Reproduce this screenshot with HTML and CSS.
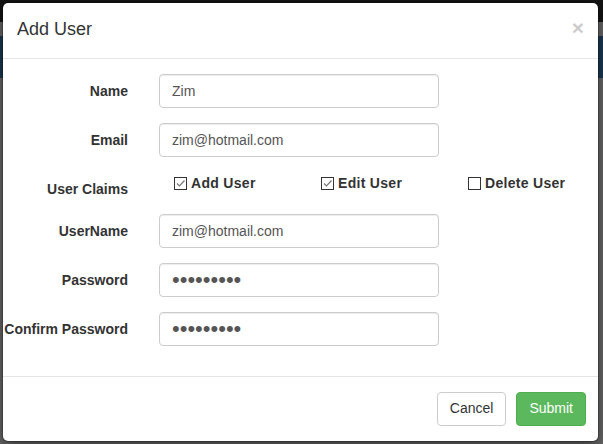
FILE: index.html
```html
<!DOCTYPE html>
<html>
<head>
<meta charset="utf-8">
<link rel="stylesheet" href="styles.css">
</head>
<body>
<div class="modal">
  <div class="modal-header">
    <h4 class="modal-title">Add User</h4>
    <span class="close">&times;</span>
  </div>
  <div class="modal-body">
    <div class="row">
      <label class="lbl">Name</label>
      <input class="input" type="text" value="Zim">
    </div>
    <div class="row">
      <label class="lbl">Email</label>
      <input class="input" type="text" value="zim@hotmail.com">
    </div>
    <div class="row claims-row">
      <label class="lbl">User Claims</label>
      <div class="claims">
        <span class="claim"><span class="box checked"><svg width="11" height="11" viewBox="0 0 11 11"><path d="M2 5.5 L4.5 8 L9.5 2.5" fill="none" stroke="#777" stroke-width="1.2"/></svg></span>Add User</span>
        <span class="claim"><span class="box checked"><svg width="11" height="11" viewBox="0 0 11 11"><path d="M2 5.5 L4.5 8 L9.5 2.5" fill="none" stroke="#777" stroke-width="1.2"/></svg></span>Edit User</span>
        <span class="claim"><span class="box"></span>Delete User</span>
      </div>
    </div>
    <div class="row">
      <label class="lbl">UserName</label>
      <input class="input" type="text" value="zim@hotmail.com">
    </div>
    <div class="row">
      <label class="lbl">Password</label>
      <input class="input pw" type="password" value="123456789">
    </div>
    <div class="row">
      <label class="lbl">Confirm Password</label>
      <input class="input pw" type="password" value="123456789">
    </div>
  </div>
  <div class="modal-footer">
    <button class="btn btn-default">Cancel</button>
    <button class="btn btn-success">Submit</button>
  </div>
</div>
</body>
</html>
```
FILE: styles.css
```css
html, body {
  margin: 0;
  padding: 0;
}
body {
  width: 603px;
  height: 444px;
  overflow: hidden;
  font-family: "Liberation Sans", Arial, sans-serif;
  font-size: 14px;
  line-height: 1.42857;
  color: #333;
  background:
    linear-gradient(to bottom,
      #141414 0, #141414 22px,
      #6a6a6a 22px, #6a6a6a 36px,
      #1d3a53 36px, #1d3a53 78px,
      #6a6a6a 78px, #6a6a6a 100%);
  padding-top: 2px;
  box-sizing: border-box;
}
.modal {
  margin-left: 2px;
  width: 597px;
  box-sizing: border-box;
  background: #fff;
  border: 1px solid rgba(0,0,0,.2);
  border-radius: 6px;
  box-shadow: 0 5px 15px rgba(0,0,0,.5);
  background-clip: padding-box;
  display: flex;
  flex-direction: column;
}
.modal-header {
  padding: 14px 15px 15px 14px;
  border-bottom: 1px solid #e5e5e5;
  display: flex;
  justify-content: space-between;
  align-items: flex-start;
}
.modal-title {
  margin: 0;
  font-size: 18px;
  font-weight: normal;
  line-height: 1.42857;
  color: #333;
}
.close {
  font-size: 21px;
  font-weight: bold;
  line-height: 1;
  color: #000;
  opacity: .2;
  margin-top: 0;
  margin-right: -1px;
}
.modal-body {
  padding: 15px 15px 15px 14px;
  display: flow-root;
}
.row {
  display: grid;
  grid-template-columns: 111px 280px;
  column-gap: 31px;
  margin-bottom: 15px;
}
.lbl {
  display: flex;
  justify-content: flex-end;
  white-space: nowrap;
  padding-top: 7px;
  font-weight: bold;
  line-height: 20px;
  color: #333;
}
.input {
  display: block;
  width: 280px;
  height: 34px;
  box-sizing: border-box;
  padding: 6px 12px;
  font-family: "Liberation Sans", Arial, sans-serif;
  font-size: 14px;
  line-height: 1.42857;
  color: #555;
  background: #fff;
  border: 1px solid #ccc;
  border-radius: 4px;
  box-shadow: inset 0 1px 1px rgba(0,0,0,.075);
  outline: none;
  margin: 0;
}
.input.pw {
  font-size: 22px;
  line-height: 20px;
  padding: 6px 12px;
  letter-spacing: 0;
}
.claims-row {
  grid-template-columns: 111px auto;
  height: 27px;
}
.claims {
  display: grid;
  grid-template-columns: 147px 147px auto;
  padding-left: 15px;
  padding-top: 2px;
}
.claim {
  display: flex;
  align-items: center;
  height: 20px;
  font-weight: bold;
  white-space: nowrap;
  letter-spacing: 0.3px;
}
.box {
  width: 13px;
  height: 13px;
  box-sizing: border-box;
  border: 1px solid #333;
  margin-right: 4px;
  display: flex;
  align-items: center;
  justify-content: center;
  margin-top: -1px;
}
.box svg {
  display: block;
}
.modal-footer {
  margin-top: 0;
  padding: 15px 12px 15px 15px;
  border-top: 1px solid #e5e5e5;
  display: flex;
  justify-content: flex-end;
  gap: 10px;
}
.btn {
  height: 34px;
  box-sizing: border-box;
  padding: 6px 12px;
  font-family: "Liberation Sans", Arial, sans-serif;
  font-size: 14px;
  line-height: 1.42857;
  border: 1px solid transparent;
  border-radius: 4px;
  margin: 0;
}
.btn-default {
  color: #333;
  background: #fff;
  border-color: #ccc;
}
.btn-success {
  color: #fff;
  background: #5cb85c;
  border-color: #4cae4c;
}
```
